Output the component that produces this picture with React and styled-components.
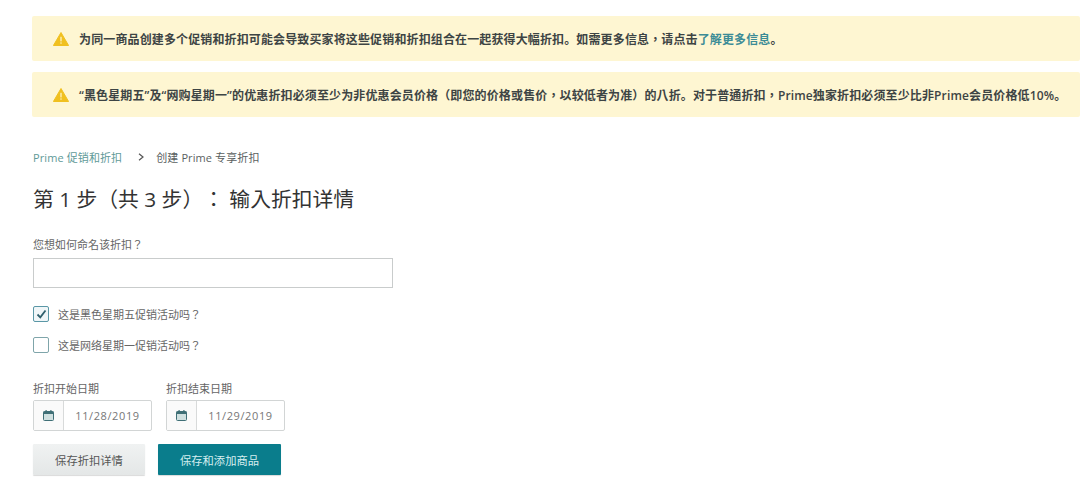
import styled, { createGlobalStyle } from "styled-components";

const GlobalStyle = createGlobalStyle`
  html, body {
    margin: 0;
    padding: 0;
    background: #fff;
  }
  body {
    font-family: "Open Sans", "Noto Sans CJK TC", sans-serif;
    color: #444;
    text-spacing-trim: space-all;
  }
`;

const Page = styled.div`
  width: 1080px;
  height: 488px;
  overflow: hidden;
  box-sizing: border-box;
  padding-top: 16px;
`;

const Banner = styled.div`
  display: flex;
  align-items: center;
  height: 45px;
  margin: 0 0 11px 32px;
  padding-left: 21px;
  background: #fef6d2;
  border-radius: 2px;
  font-size: 12px;
  font-weight: 600;
  letter-spacing: 0.13px;
  color: #3d4444;
  white-space: nowrap;
`;

const WarnIcon = styled.svg`
  width: 16px;
  height: 14px;
  margin-right: 10px;
  flex-shrink: 0;
`;

const BannerLink = styled.a`
  color: #3c8c96;
`;

/* the full stop sits low and left in the reference, unlike the other marks */
const Stop = styled.span`
  font-family: "Noto Sans CJK SC", sans-serif;
`;

const Content = styled.div`
  padding-left: 33px;
`;

const Breadcrumb = styled.nav`
  display: flex;
  align-items: center;
  margin-top: 31px;
  height: 18px;
  font-size: 11px;
  letter-spacing: 0.1px;
  color: #5a5f5f;
`;

const Crumb = styled.a`
  color: #5f9a98;
`;

const Chevron = styled.svg`
  width: 8px;
  height: 8px;
  margin: 0 11px 0 15px;
`;

const Heading = styled.h1`
  margin: 16px 0 0;
  height: 34px;
  line-height: 34px;
  font-size: 20.8px;
  font-weight: 400;
  color: #333;
  white-space: nowrap;
`;

const FieldLabel = styled.label`
  display: block;
  font-size: 11px;
  line-height: 16px;
  color: #666;
`;

const NameField = styled.div`
  margin-top: 21px;
`;

const TextInput = styled.input`
  display: block;
  box-sizing: border-box;
  width: 360px;
  height: 30px;
  margin-top: 5px;
  border: 1px solid #c9cccc;
  background: #fff;
`;

const CheckRow = styled.div`
  display: flex;
  align-items: center;
  height: 17px;
  margin-top: ${(p) => p.$top}px;
  font-size: 11px;
  color: #666;
`;

const Box = styled.span`
  display: flex;
  align-items: center;
  justify-content: center;
  box-sizing: border-box;
  width: 16px;
  height: 16px;
  margin-right: 9px;
  border: 1px solid ${(p) => (p.$checked ? "#5a97a6" : "#7fa5aa")};
  border-radius: 2px;
  background: ${(p) => (p.$checked ? "#f0f6f8" : "#fff")};
`;

const DateRow = styled.div`
  display: flex;
  gap: 14px;
  margin-top: 28px;
`;

const DateField = styled.div`
  width: 119px;
`;

const DateBox = styled.div`
  display: flex;
  box-sizing: border-box;
  height: 31px;
  margin-top: 3px;
  border: 1px solid #d2d5d5;
  border-radius: 2px;
`;

const DateIcon = styled.span`
  display: flex;
  align-items: center;
  justify-content: center;
  width: 29px;
  background: #fafafa;
  border-right: 1px solid #d8dada;
`;

const DateValue = styled.span`
  flex: 1;
  text-align: center;
  line-height: 29px;
  font-size: 11px;
  letter-spacing: 0.6px;
  color: #777;
`;

const ButtonRow = styled.div`
  display: flex;
  gap: 13px;
  margin-top: 13px;
`;

const Button = styled.button`
  box-sizing: border-box;
  width: ${(p) => (p.$primary ? 123 : 112)}px;
  height: 31px;
  padding: 0;
  border: none;
  border-radius: 1px;
  font-family: inherit;
  font-size: 11.3px;
  color: ${(p) => (p.$primary ? "#d6eef0" : "#555")};
  background: ${(p) => (p.$primary ? "#0a7d8c" : "linear-gradient(#f0f2f2, #e4e7e7)")};
  box-shadow: 0 1px 1px rgba(0, 0, 0, 0.15);
`;

function Warning() {
  return (
    <WarnIcon viewBox="0 0 16 14">
      <path d="M8 0.5 L15.6 13.5 H0.4 Z" fill="#f0c020" stroke="#f0c020" strokeLinejoin="round" />
      <rect x="7.4" y="4.8" width="1.2" height="4.6" fill="#fff6d0" />
      <rect x="7.4" y="10.4" width="1.2" height="1.3" fill="#fff6d0" />
    </WarnIcon>
  );
}

function Calendar() {
  return (
    <svg width="11" height="11" viewBox="0 0 11 11">
      <rect x="0.5" y="1.5" width="10" height="9" rx="1" fill="#cfe0e0" stroke="#3f6f76" />
      <rect x="0.5" y="1.5" width="10" height="2.5" fill="#3f6f76" />
      <rect x="2.5" y="0" width="1.2" height="2" fill="#3f6f76" />
      <rect x="7.3" y="0" width="1.2" height="2" fill="#3f6f76" />
    </svg>
  );
}

export default function App() {
  return (
    <>
      <GlobalStyle />
      <Page>
        <Banner>
          <Warning />
          <span>
            为同一商品创建多个促销和折扣可能会导致买家将这些促销和折扣组合在一起获得大幅折扣<Stop>。</Stop>如需更多信息，请点击
            <BannerLink>了解更多信息</BannerLink>
            <Stop>。</Stop>
          </span>
        </Banner>
        <Banner>
          <Warning />
          <span>
            “黑色星期五”及“网购星期一”的优惠折扣必须至少为非优惠会员价格（即您的价格或售价，以较低者为准）的八折<Stop>。</Stop>对于普通折扣，Prime独家折扣必须至少比非Prime会员价格低10%<Stop>。</Stop>
          </span>
        </Banner>

        <Content>
          <Breadcrumb>
            <Crumb>Prime 促销和折扣</Crumb>
            <Chevron viewBox="0 0 8 8">
              <path d="M2 0.8 L6 4 L2 7.2" fill="none" stroke="#555" strokeWidth="1.2" />
            </Chevron>
            <span>创建 Prime 专享折扣</span>
          </Breadcrumb>

          <Heading>第 1 步（共 3 步）： 输入折扣详情</Heading>

          <NameField>
            <FieldLabel>您想如何命名该折扣？</FieldLabel>
            <TextInput type="text" />
          </NameField>

          <CheckRow $top={17}>
            <Box $checked>
              <svg width="11" height="10" viewBox="0 0 11 10">
                <path d="M1.5 5.5 L4.3 8.3 L9.5 1.5" fill="none" stroke="#2f5f6c" strokeWidth="1.8" />
              </svg>
            </Box>
            这是黑色星期五促销活动吗？
          </CheckRow>
          <CheckRow $top={14}>
            <Box />
            这是网络星期一促销活动吗？
          </CheckRow>

          <DateRow>
            <DateField>
              <FieldLabel>折扣开始日期</FieldLabel>
              <DateBox>
                <DateIcon>
                  <Calendar />
                </DateIcon>
                <DateValue>11/28/2019</DateValue>
              </DateBox>
            </DateField>
            <DateField>
              <FieldLabel>折扣结束日期</FieldLabel>
              <DateBox>
                <DateIcon>
                  <Calendar />
                </DateIcon>
                <DateValue>11/29/2019</DateValue>
              </DateBox>
            </DateField>
          </DateRow>

          <ButtonRow>
            <Button>保存折扣详情</Button>
            <Button $primary>保存和添加商品</Button>
          </ButtonRow>
        </Content>
      </Page>
    </>
  );
}
